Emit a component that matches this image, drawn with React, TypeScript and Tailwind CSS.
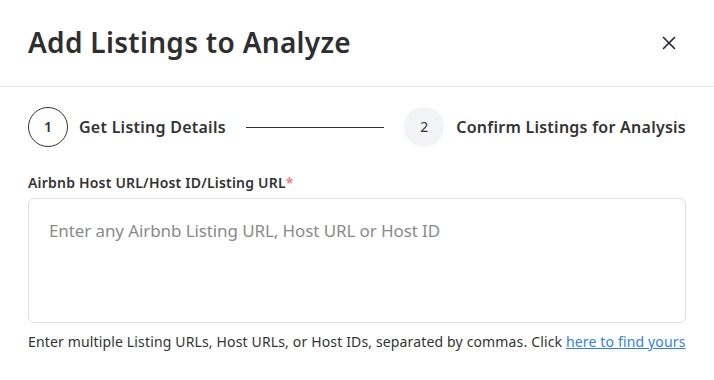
import { X } from "lucide-react";

export default function App() {
    return (
        <div className="w-[714px] h-[380px] bg-white text-[#333] overflow-hidden" style={{ fontFamily: '"Noto Sans", Arial, sans-serif' }}>
            {/* Header */}
            <div className="h-[87px] flex items-center justify-between pl-7 pr-[34px] border-b border-[#e5e5e5]">
                <h1 className="text-[28px] font-semibold text-[#2e2e2e] tracking-[0.3px] pb-[2px]">Add Listings to Analyze</h1>
                <button className="text-[#1f2937]">
                    <X className="w-[22px] h-[22px]" strokeWidth={1.8} />
                </button>
            </div>

            {/* Stepper */}
            <div className="px-7 pt-5 flex items-center">
                <div className="w-10 h-10 rounded-full border border-[#333] flex items-center justify-center text-sm font-semibold">1</div>
                <span className="ml-[11px] text-[16px] font-semibold tracking-[0.25px] text-[#333]">Get Listing Details</span>
                <div className="mx-5 flex-1 h-px bg-[#333]" />
                <div className="w-10 h-10 rounded-full bg-[#f3f4f6] flex items-center justify-center text-sm">2</div>
                <span className="ml-[12px] text-[16px] font-semibold tracking-[0.25px] text-[#333]">Confirm Listings for Analysis</span>
            </div>

            {/* Field */}
            <div className="px-7 pt-[25px]">
                <label className="block text-[14px] font-semibold tracking-[0.2px] text-[#333]">
                    Airbnb Host URL/Host ID/Listing URL<span className="text-[#f87171]">*</span>
                </label>
                <textarea
                    className="mt-[5px] block w-full h-[125px] rounded-md border border-[#e0e0e0] px-5 py-[19px] text-[17px] tracking-[-0.1px] resize-none outline-none placeholder:text-[#8a8a8a]"
                    placeholder="Enter any Airbnb Listing URL, Host URL or Host ID"
                />
                <p className="mt-2 text-[14px] tracking-[0.15px] text-[#333]">
                    Enter multiple Listing URLs, Host URLs, or Host IDs, separated by commas. Click{" "}
                    <a href="#" className="text-[#2f80ed] underline">here to find yours</a>
                </p>
            </div>
        </div>
    );
}
